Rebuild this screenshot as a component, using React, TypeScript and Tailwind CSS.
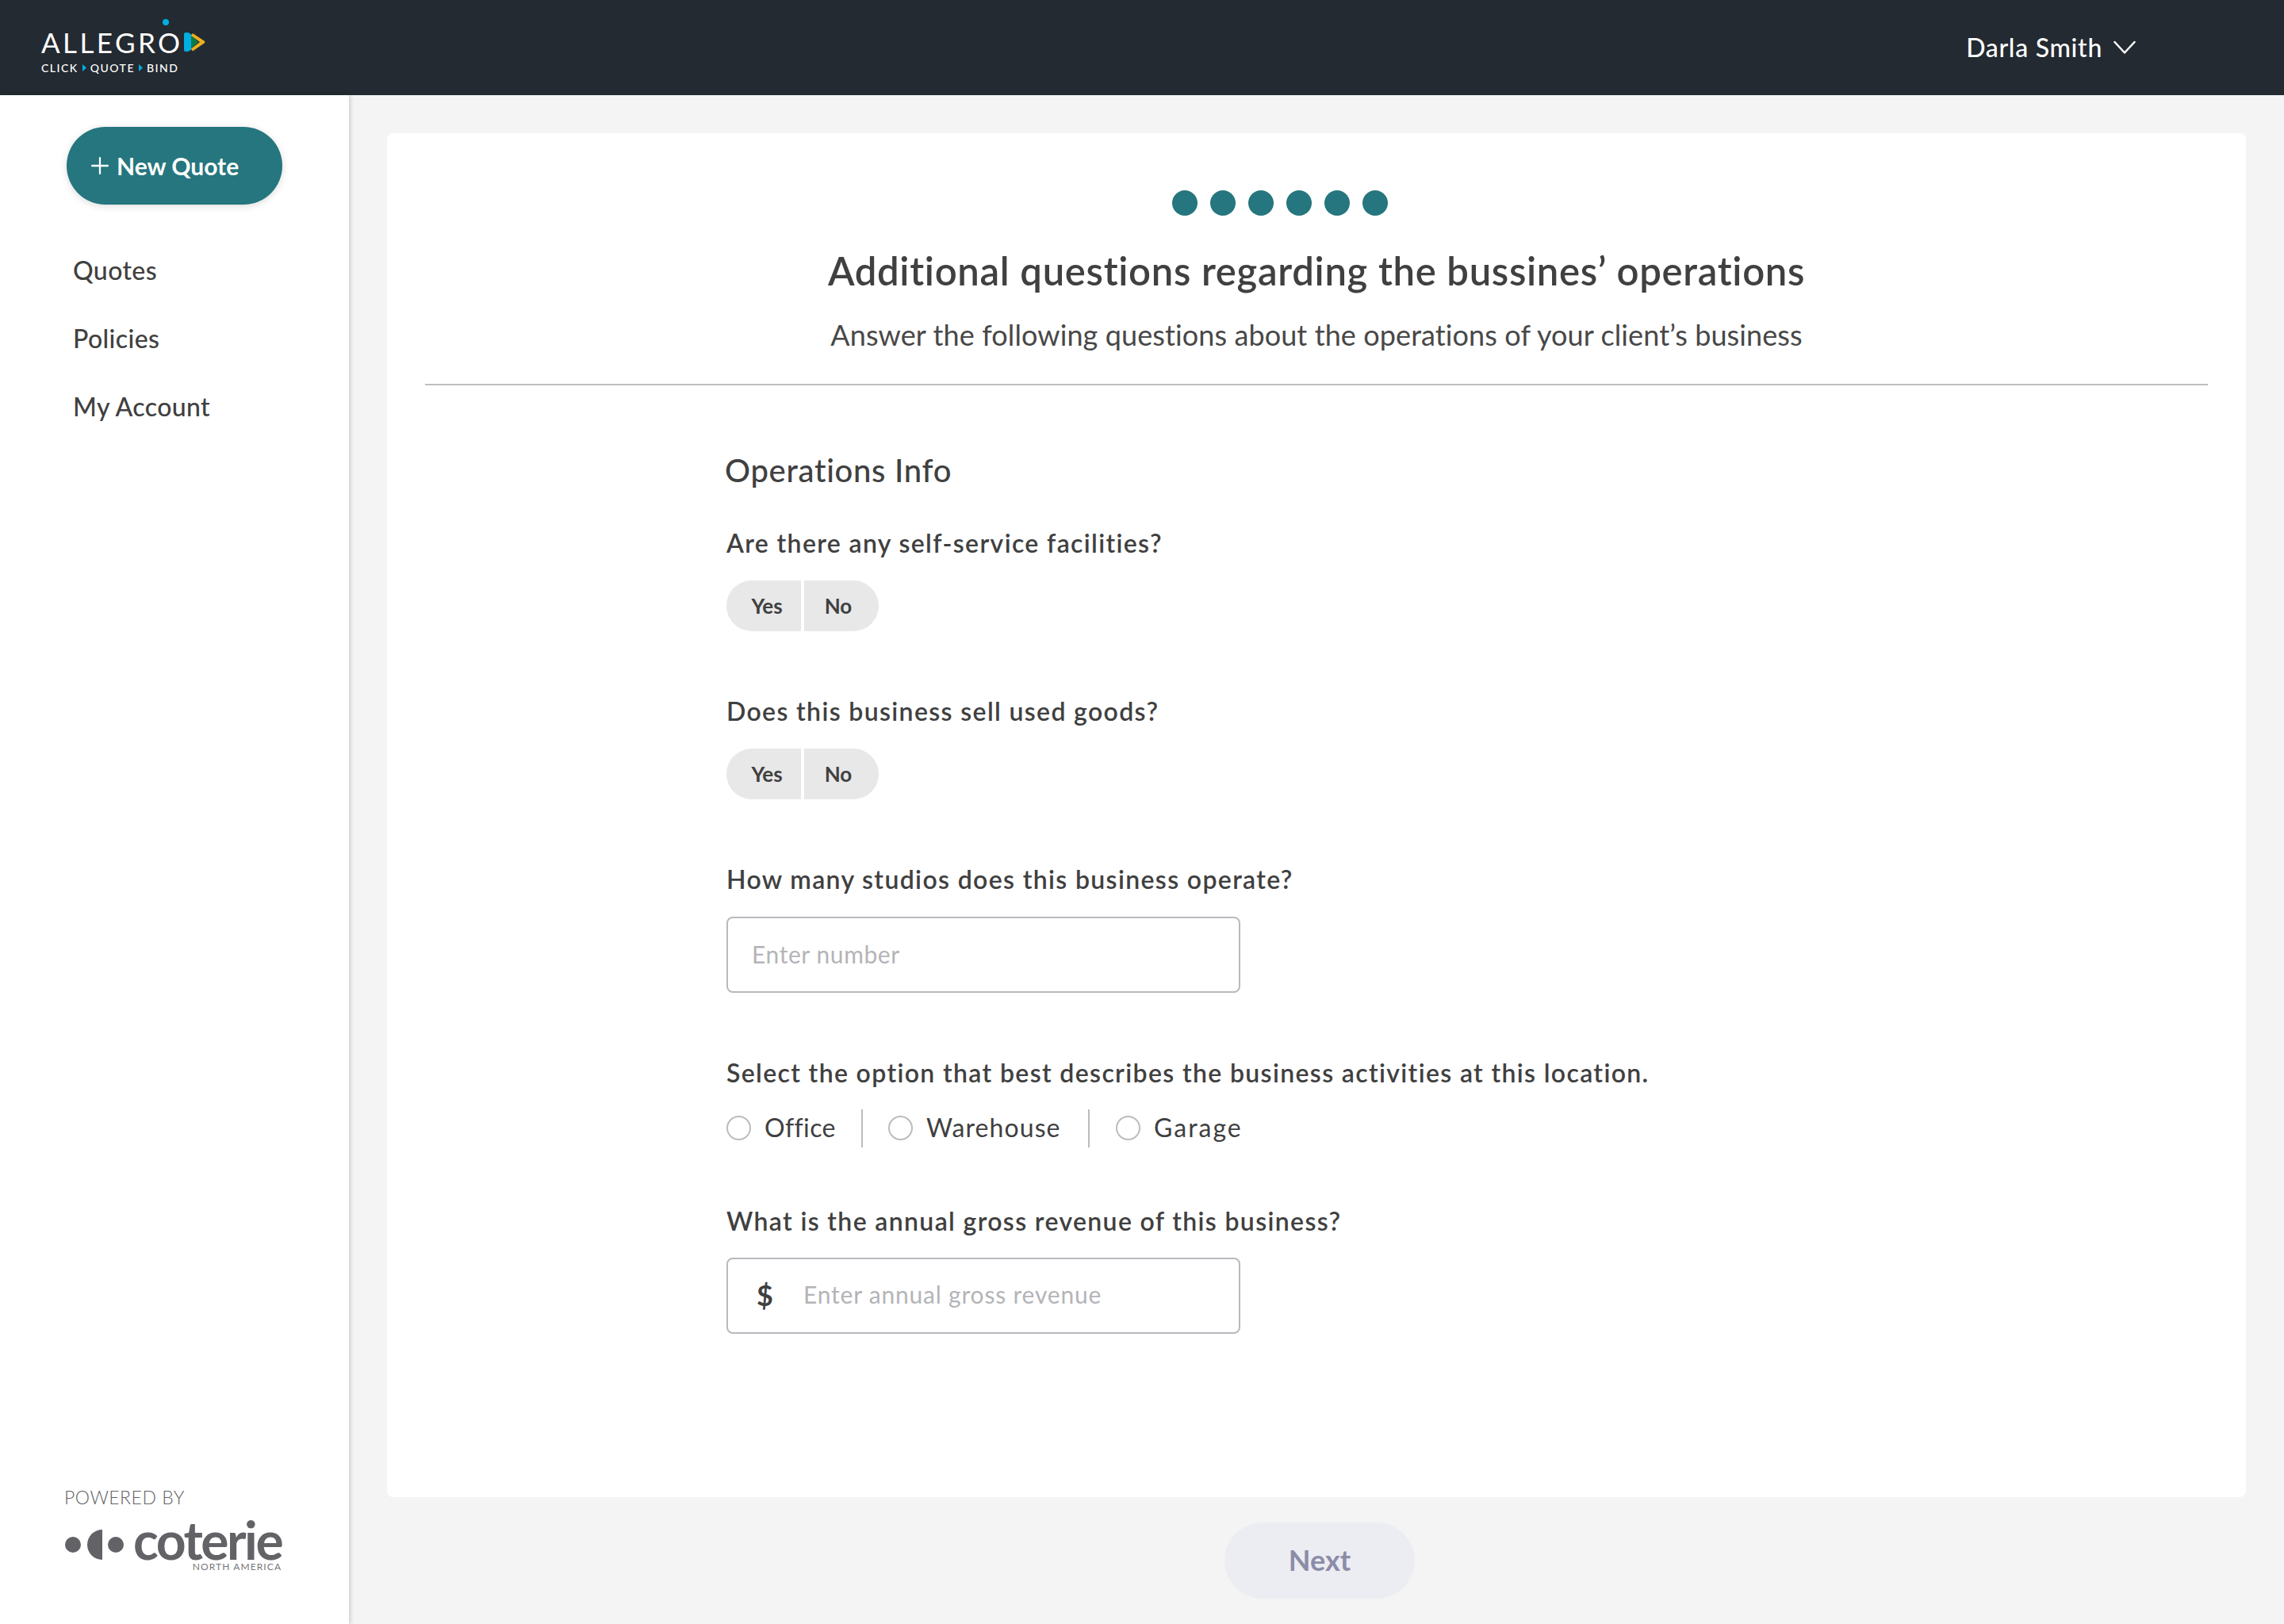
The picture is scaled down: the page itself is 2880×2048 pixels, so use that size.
import { Plus } from "lucide-react";

const sans = "font-['Lato','Noto_Sans',sans-serif]";

function YesNo() {
  return (
    <div className="mt-[27px] flex h-[64px] w-[192px] gap-[4px] text-[26px] font-bold text-[#404040]">
      <div className="flex w-[94px] items-center justify-center rounded-l-[32px] bg-[#e8e8e8] pl-[8px]">
        Yes
      </div>
      <div className="flex flex-1 items-center justify-center rounded-r-[32px] bg-[#e8e8e8] pr-[8px]">
        No
      </div>
    </div>
  );
}

function Radio({ label, className }: { label: string; className: string }) {
  return (
    <div className={`flex items-center gap-[17px] ${className}`}>
      <span className="mb-[2px] h-[31px] w-[31px] shrink-0 rounded-full border-2 border-[#bcbcc0]" />
      <span className="pb-[3px] text-[32px] text-[#404040]">{label}</span>
    </div>
  );
}

function Label({ children, className = "" }: { children: string; className?: string }) {
  return (
    <div className={`h-[40px] text-[32px] leading-[40px] font-semibold tracking-[1.35px] text-[#404040] ${className}`}>
      {children}
    </div>
  );
}

function AllegroLogo() {
  return (
    <div className="relative mt-[10px] w-[210px]">
      <div className="flex h-[34px] items-center text-[35px] leading-[34px] font-normal tracking-[3.4px] text-white">
        ALLEGRO
      </div>
      <span className="absolute top-[-12px] left-[153px] h-[8px] w-[8px] rounded-full bg-[#00aee0]" />
      <svg className="absolute top-[5px] left-[180px]" width="27" height="24" viewBox="0 0 27 24">
        <path d="M2 0h2.500c1 0 2 .5 3 1.200L10 3v18l-2.500 1.800c-1 .7-2 1.200-3 1.200H2a2 2 0 0 1-2-2V2a2 2 0 0 1 2-2z" fill="#00aee0" />
        <path d="M9 3.500 18 12 9 20.500z" fill="#0a7b4a" />
        <path d="M11 1 25.500 10.500c1.200.9 1.200 2.100 0 3L11 23.500 9 20.500 20 12 9 4z" fill="#edae1e" />
      </svg>
      <div className="mt-[7px] flex items-center text-[14px] leading-[18px] font-medium tracking-[1.5px] text-white">
        CLICK
        <svg className="mx-[5px]" width="5" height="9" viewBox="0 0 5 9"><path d="M0 0l5 4.500L0 9z" fill="#00aee0" /></svg>
        QUOTE
        <svg className="mx-[5px]" width="5" height="9" viewBox="0 0 5 9"><path d="M0 0l5 4.500L0 9z" fill="#00aee0" /></svg>
        BIND
      </div>
    </div>
  );
}

function CoterieLogo() {
  return (
    <div className="mt-[14px] flex items-start">
      <svg className="mt-[13px] shrink-0" width="84" height="40" viewBox="0 0 84 40">
        <circle cx="11" cy="20" r="10" fill="#636367" />
        <path d="M48 1a19 19 0 0 0 0 38z" fill="#636367" />
        <circle cx="65" cy="20" r="10" fill="#636367" />
      </svg>
      <div className="ml-[3px] flex flex-col items-end">
        <div className="h-[54px] text-[66px] leading-[54px] font-bold tracking-[-2.5px] text-[#636367]">coterie</div>
        <div className="text-[12px] leading-[14px] tracking-[1.1px] text-[#77777b]">NORTH AMERICA</div>
      </div>
    </div>
  );
}

export default function App() {
  return (
    <div className={`flex h-[2048px] w-[2880px] flex-col overflow-hidden bg-[#f4f4f4] ${sans}`}>
      <header className="flex h-[120px] shrink-0 items-center justify-between bg-[#232a31] pr-[187px] pl-[52px]">
        <AllegroLogo />
        <div className="flex items-center gap-[14px] text-[32px] font-medium tracking-[0.7px] text-white">
          Darla Smith
          <svg width="28" height="18" viewBox="0 0 28 18" fill="none" stroke="currentColor" strokeWidth="2.500" strokeLinecap="round" strokeLinejoin="round">
            <path d="M1.500 2 14 15.500 26.500 2" />
          </svg>
        </div>
      </header>

      <div className="flex min-h-0 flex-1">
        <aside className="relative z-10 flex w-[440px] shrink-0 flex-col bg-white shadow-[2px_0_5px_rgba(0,0,0,0.16)]">
          <button className="mt-[40px] ml-[84px] flex h-[98px] w-[272px] items-center rounded-full bg-[#25767e] pl-[25px] text-[30px] font-bold text-white shadow-[0_2px_10px_rgba(0,0,0,0.14)]">
            <Plus size={34} strokeWidth={1.6} className="mr-[4px]" />
            New Quote
          </button>
          <nav className="mt-[40px] flex flex-col pl-[92px] text-[32px] font-medium tracking-[0.4px] text-[#404040]">
            <a className="flex h-[86px] items-center">Quotes</a>
            <a className="flex h-[86px] items-center">Policies</a>
            <a className="flex h-[86px] items-center">My Account</a>
          </nav>
          <div className="mt-auto mb-[65px] ml-[81px] w-[290px]">
            <div className="text-[23px] leading-[26px] font-light tracking-[0.5px] text-[#636367]">POWERED BY</div>
            <CoterieLogo />
          </div>
        </aside>

        <main className="flex min-w-0 flex-1 flex-col pt-[48px] pr-[48px] pl-[48px]">
          <section className="h-[1720px] shrink-0 rounded-[8px] bg-white pt-[72px]">
            <div className="flex justify-center gap-[16px] pr-[92px]">
              {[0, 1, 2, 3, 4, 5].map((step) => (
                <span key={step} className="h-[32px] w-[32px] rounded-full bg-[#25767e]" />
              ))}
            </div>
            <h1 className="mt-[41px] text-center text-[49px] leading-[56px] font-semibold tracking-[0.7px] text-[#404040]">
              Additional questions regarding the bussines’ operations
            </h1>
            <p className="mt-[31px] text-center text-[36px] leading-[44px] font-normal tracking-[0.1px] text-[#484848]">
              Answer the following questions about the operations of your client’s business
            </p>
            <hr className="mx-[48px] mt-[40px] border-0 border-t-2 border-[#bdbdbd]" />

            <div className="pl-[428px]">
              <h2 className="mt-[83px] -ml-[2px] text-[40px] leading-[48px] font-medium tracking-[0.7px] text-[#404040]">
                Operations Info
              </h2>
              <Label className="mt-[48px]">Are there any self-service facilities?</Label>
              <YesNo />
              <Label className="mt-[81px]">Does this business sell used goods?</Label>
              <YesNo />
              <Label className="mt-[81px]">How many studios does this business operate?</Label>
              <input
                placeholder="Enter number"
                className="mt-[27px] block h-[96px] w-[648px] rounded-[8px] border-2 border-[#b9b9be] px-[30px] pb-[3px] text-[30px] tracking-[0.6px] outline-none placeholder:text-[#b4b4b8]"
              />
              <Label className="mt-[81px]">Select the option that best describes the business activities at this location.</Label>
              <div className="mt-[26px] flex h-[48px] items-center">
                <Radio label="Office" className="w-[170px] tracking-[0.4px]" />
                <span className="h-[48px] w-[2px] bg-[#bcbcc0]" />
                <Radio label="Warehouse" className="ml-[32px] w-[252px] tracking-[1.1px]" />
                <span className="h-[48px] w-[2px] bg-[#bcbcc0]" />
                <Radio label="Garage" className="ml-[33px] tracking-[2px]" />
              </div>
              <Label className="mt-[73px]">What is the annual gross revenue of this business?</Label>
              <div className="mt-[26px] flex h-[96px] w-[648px] items-center rounded-[8px] border-2 border-[#b9b9be] pb-[3px] pl-[36px]">
                <span className="w-[59px] text-[36px] font-bold text-[#404040]">$</span>
                <input
                  placeholder="Enter annual gross revenue"
                  className="min-w-0 flex-1 text-[30px] tracking-[0.8px] outline-none placeholder:text-[#b4b4b8]"
                />
              </div>
            </div>
          </section>

          <div className="flex justify-center pl-[8px]">
            <button className="mt-[32px] h-[96px] w-[240px] rounded-full bg-[#ecedf2] pb-[2px] text-[36px] font-bold text-[#8c8ca8]">
              Next
            </button>
          </div>
        </main>
      </div>
    </div>
  );
}
